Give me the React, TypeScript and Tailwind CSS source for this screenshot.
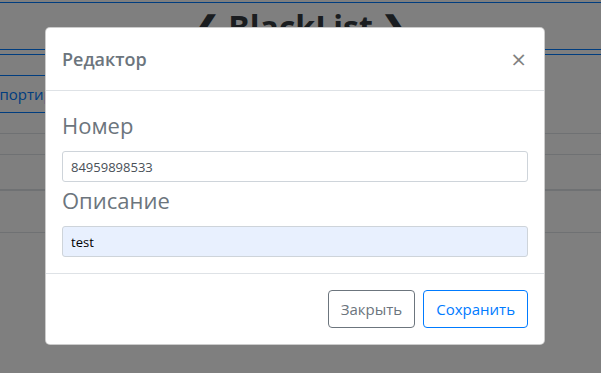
import React from 'react'

const font = { fontFamily: '"Open Sans", "Noto Sans", Arial, sans-serif' }

function BackgroundPage() {
  return (
    <div className="flex flex-col">
      <div className="mt-[2px] border-t border-[#007bff]" />
      <h1 className="h-[46px] pt-[4px] text-center text-[32px] font-bold leading-[40px] text-[#343a40]">
        ❮ BlackList ❯
      </h1>
      <div className="h-[6px] border-y border-[#007bff]" />
      <div className="h-[20px]" />
      <div className="flex">
        <button className="-ml-[36px] h-[38px] w-[300px] border border-[#007bff] px-3 text-left text-[15px] text-[#007bff]">
          Импортировать
        </button>
      </div>
      <div className="h-[20px]" />
      <div className="h-[21px] border-t border-[#dee2e6]" />
      <div className="h-[35px] border-t border-[#dee2e6]" />
      <div className="h-[43px] border-t-2 border-[#dee2e6]" />
      <div className="border-t border-[#dee2e6]" />
    </div>
  )
}

export default function App() {
  return (
    <div className="relative h-[373px] w-[601px] overflow-hidden bg-white" style={font}>
      <BackgroundPage />
      <div className="absolute inset-0 bg-black/50" />

      <div className="absolute left-[45px] top-[27px] w-[500px] rounded-[5px] border border-black/20 bg-white">
        <div className="flex items-start justify-between border-b border-[#dee2e6] p-4">
          <h5 className="text-[18px] font-semibold leading-[30px] text-[#6c757d]">Редактор</h5>
          <button className="-m-4 p-4 pr-[18px] text-[26px] font-normal leading-[30px] text-black/50">×</button>
        </div>

        <div className="p-4">
          <label className="mb-2 block text-[22px] leading-[36px] text-[#6c757d]">Номер</label>
          <input
            readOnly
            value="84959898533"
            className="block h-[31px] w-full rounded-[3px] border border-[#ced4da] bg-white px-2 text-[13px] text-[#495057] outline-none"
          />
          <label className="mb-2 block text-[22px] leading-[36px] text-[#6c757d]">Описание</label>
          <input
            readOnly
            value="test"
            className="block h-[31px] w-full rounded-[3px] border border-[#ced4da] bg-[#e8f0fe] px-2 text-[13px] text-black outline-none"
          />
        </div>

        <div className="flex items-center justify-end gap-2 border-t border-[#dee2e6] py-3 pr-4">
          <button className="my-1 h-[38px] rounded-[4px] border border-[#6c757d] px-3 text-[15px] text-[#6c757d]">
            Закрыть
          </button>
          <button className="my-1 h-[38px] rounded-[4px] border border-[#007bff] px-3 text-[15px] text-[#007bff]">
            Сохранить
          </button>
        </div>
      </div>
    </div>
  )
}
